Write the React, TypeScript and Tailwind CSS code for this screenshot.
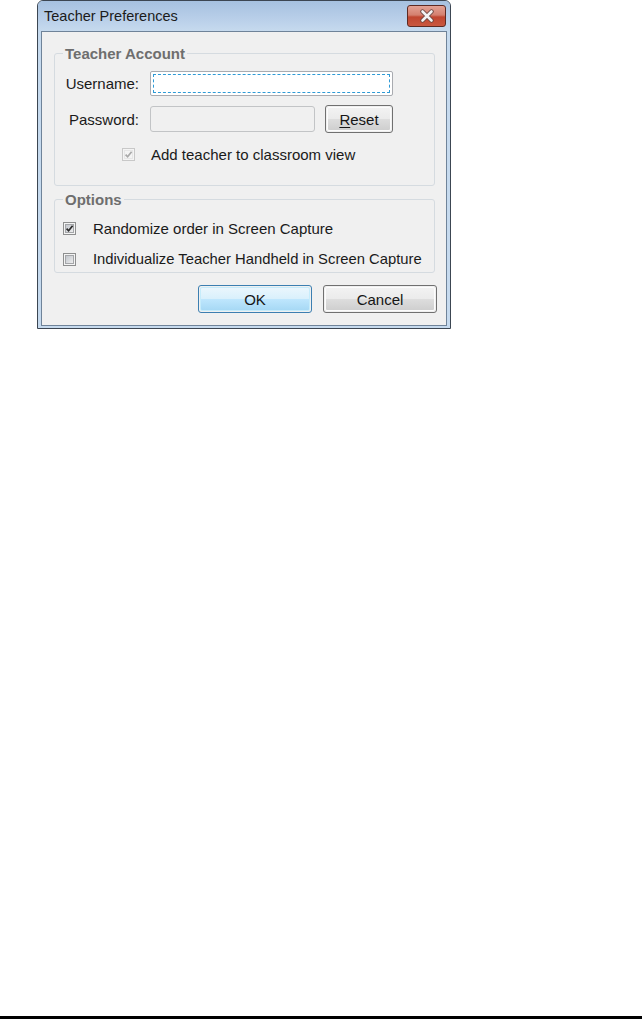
import React from "react";

function CheckBox({ checked, disabled }: { checked?: boolean; disabled?: boolean }) {
  return (
    <div
      className={
        "w-[13px] h-[13px] shrink-0 border p-[1px] " +
        (disabled ? "border-[#c8c8c8] bg-[#f4f4f4]" : "border-[#8e8f8f] bg-[#f4f4f4]")
      }
    >
      <div
        className={
          "w-full h-full border " +
          (disabled
            ? "border-[#e6e6e6] bg-[#f4f4f4]"
            : "border-[#a4a6a9] bg-[linear-gradient(135deg,#c3c7cd_0%,#d9dbde_55%,#eeeeee_100%)]")
        }
      >
        {checked && (
          <svg width="9" height="9" viewBox="0 0 9 9" className="block -ml-[1px] -mt-[1px]">
            <path
              d="M1.6 4.6 L3.6 6.8 L7.6 1.8"
              fill="none"
              stroke={disabled ? "#a9a9a9" : "#2b2b2b"}
              strokeWidth="1.7"
            />
          </svg>
        )}
      </div>
    </div>
  );
}

function Button({ children, primary, className }: { children: React.ReactNode; primary?: boolean; className?: string }) {
  return (
    <div
      className={
        "h-[28px] rounded-[3px] border p-[1px] " +
        (primary ? "border-[#3c7fb1] " : "border-[#707070] ") +
        (className || "")
      }
    >
      <div
        className={
          "h-full w-full rounded-[2px] border flex items-center justify-center text-[15px] leading-none text-[#151515] " +
          (primary
            ? "border-[#c6ecfb] bg-[linear-gradient(#eaf6fd_0%,#d9f0fc_48%,#bee6fd_52%,#a7d9f5_100%)]"
            : "border-[#fcfcfc] bg-[linear-gradient(#f2f2f2_0%,#ebebeb_48%,#dddddd_52%,#cfcfcf_100%)]")
        }
      >
        {children}
      </div>
    </div>
  );
}

export default function App() {
  return (
    <div className="h-[1019px] w-[642px] bg-white flex flex-col font-['Liberation_Sans',Arial,sans-serif] text-[#1a1a1a]">
      <div className="ml-[37px] w-[414px] h-[329px] flex flex-col rounded-t-[6px] border border-[#3c4652] bg-[#c6daee]">
        {/* Title bar */}
        <div className="h-[30px] shrink-0 flex items-start justify-between pl-[6px] pr-[4px] rounded-t-[5px] bg-[linear-gradient(#a6c1e0_0%,#b9cfe9_60%,#c6daee_100%)]">
          <div className="pt-[7px] text-[14.5px] leading-[17px] text-[#1b1b1b]">Teacher Preferences</div>
          <div className="mt-[4px] w-[39px] h-[22px] rounded-[3px] border border-[#5e2a22] bg-[linear-gradient(#e3a294_0%,#d4806f_45%,#c04630_55%,#c95840_100%)] flex items-center justify-center">
            <svg width="16" height="14" viewBox="0 0 16 14">
              <path d="M3.5 2.5 L12.5 11.5 M12.5 2.5 L3.5 11.5" stroke="#6a4640" strokeWidth="4.4" strokeLinecap="round" />
              <path d="M3.5 2.5 L12.5 11.5 M12.5 2.5 L3.5 11.5" stroke="#f4f4f4" strokeWidth="2.6" strokeLinecap="round" />
            </svg>
          </div>
        </div>

        {/* Client area */}
        <div className="mx-[3px] mb-[2px] flex-1 border border-[#6f8399] bg-[#f0f0f0] pl-[12px] pr-[11px] pt-[13px] flex flex-col">
          <fieldset className="rounded-[3px] border border-[#d5dbe0] pb-[22px]">
            <legend className="ml-[8px] px-[2px] text-[15px] leading-[17px] font-bold text-[#6e6e6e]">Teacher Account</legend>
            <div className="mt-[9px] grid grid-cols-[84px_auto] gap-x-[11px] items-center">
              <div className="text-right text-[15px] leading-[17px]">Username:</div>
              <div className="w-[243px] h-[25px] rounded-[2px] border border-[#a9abb0] bg-white p-[2px]">
                <div className="h-full w-full border border-dashed border-[#2f9bd6]" />
              </div>
              <div className="mt-[9px] text-right text-[15px] leading-[17px]">Password:</div>
              <div className="mt-[9px] flex items-center gap-[10px]">
                <div className="w-[165px] h-[26px] rounded-[3px] border border-[#c2c4c6] bg-[#f0f0f0]" />
                <Button className="w-[68px]">
                  <span>
                    <span className="underline underline-offset-[2px]">R</span>eset
                  </span>
                </Button>
              </div>
            </div>
            <div className="mt-[13px] h-[17px] flex items-center pl-[67px] gap-[16px]">
              <CheckBox checked disabled />
              <span className="text-[15px] leading-[17px]">Add teacher to classroom view</span>
            </div>
          </fieldset>

          <fieldset className="mt-[5px] rounded-[3px] border border-[#d5dbe0] pb-[4px]">
            <legend className="ml-[8px] px-[2px] text-[15px] leading-[17px] font-bold text-[#6e6e6e]">Options</legend>
            <div className="mt-[12px] h-[17px] flex items-center pl-[8px] gap-[17px]">
              <CheckBox checked />
              <span className="text-[15px] leading-[17px]">Randomize order in Screen Capture</span>
            </div>
            <div className="mt-[14px] h-[17px] flex items-center pl-[8px] gap-[17px]">
              <CheckBox />
              <span className="text-[14.8px] leading-[17px]">Individualize Teacher Handheld in Screen Capture</span>
            </div>
          </fieldset>

          <div className="mt-[12px] -mr-[2px] flex justify-end gap-[11px]">
            <Button primary className="w-[114px]">OK</Button>
            <Button className="w-[114px]">Cancel</Button>
          </div>
        </div>
      </div>
      <div className="flex-1" />
      <div className="h-[3px] bg-black" />
    </div>
  );
}
